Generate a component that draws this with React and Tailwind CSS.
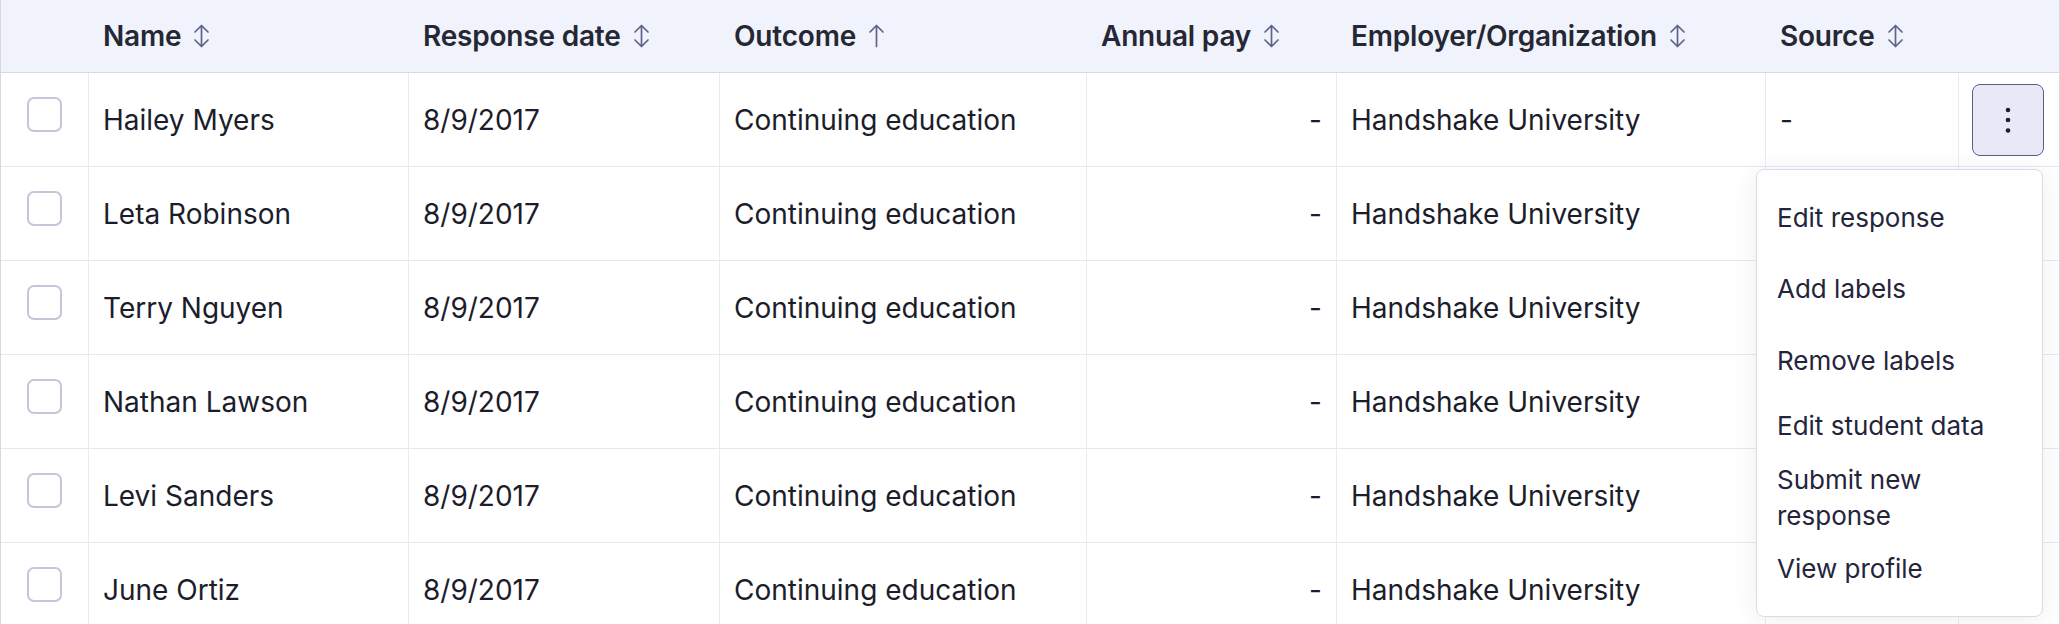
import React from "react";

const rows = [
  "Hailey Myers",
  "Leta Robinson",
  "Terry Nguyen",
  "Nathan Lawson",
  "Levi Sanders",
  "June Ortiz",
];

function SortBoth() {
  return (
    <svg width="17" height="24" viewBox="0 0 17 24" fill="none" className="ml-[12px] shrink-0">
      <path d="M8.5 1.5V22.5M2 8L8.5 1.5L15 8M2 16L8.5 22.5L15 16" stroke="#5f6389" strokeWidth="1.7" strokeLinecap="round" strokeLinejoin="round" />
    </svg>
  );
}

function SortUp() {
  return (
    <svg width="17" height="24" viewBox="0 0 17 24" fill="none" className="ml-[12px] shrink-0">
      <path d="M8.5 1.5V22.5M2 8L8.5 1.5L15 8" stroke="#5f6389" strokeWidth="1.7" strokeLinecap="round" strokeLinejoin="round" />
    </svg>
  );
}

const grid = "grid grid-cols-[87px_320px_311px_367px_250px_429px_193px_1fr]";

function Header() {
  const h = "flex items-center pl-[15px] text-[28px] font-semibold text-[#262734] tracking-[-0.2px]";
  return (
    <div className={`${grid} h-[73px] bg-[#f0f3fb] border-b border-[#d5d8e7]`}>
      <div />
      <div className={h}>Name<SortBoth /></div>
      <div className={h}>Response date<SortBoth /></div>
      <div className={h}>Outcome<SortUp /></div>
      <div className={h}>Annual pay<SortBoth /></div>
      <div className={h}>Employer/Organization<SortBoth /></div>
      <div className={h}>Source<SortBoth /></div>
      <div />
    </div>
  );
}

function Row({ name, first }) {
  const c = "flex items-center border-l border-[#eaebf2] pl-[14px] text-[28px] text-[#1c1d2b]";
  return (
    <div className={`${grid} h-[94px] border-b border-[#e7e9f1]`}>
      <div className="flex items-start pt-[24px] pl-[26px]">
        <div className="w-[35px] h-[35px] rounded-[7px] border-2 border-[#c4c7db] bg-white" />
      </div>
      <div className={c}>{name}</div>
      <div className={c}>8/9/2017</div>
      <div className={c}>Continuing education</div>
      <div className={`${c} justify-end pr-[14px]`}>-</div>
      <div className={c}>Handshake University</div>
      <div className={c}>-</div>
      <div className="flex items-center border-l border-[#eaebf2] pl-[13px]">
        {first && (
          <button className="w-[72px] h-[72px] rounded-lg border border-[#5c6080] bg-[#e8e9f6] flex items-center justify-center">
            <svg width="6" height="26" viewBox="0 0 6 26">
              <circle cx="3" cy="3" r="2.3" fill="#1e1f2e" />
              <circle cx="3" cy="13" r="2.3" fill="#1e1f2e" />
              <circle cx="3" cy="23.5" r="2.3" fill="#1e1f2e" />
            </svg>
          </button>
        )}
      </div>
    </div>
  );
}

function Menu() {
  const item = "text-[26px] leading-[36px] text-[#24253a]";
  return (
    <div className="absolute left-[1756px] top-[169px] w-[287px] bg-white border border-[#d9dbe8] rounded-lg shadow-[0_2px_24px_rgba(30,32,60,0.08)] pt-[30px] pb-[29px] pl-[20px] pr-[40px] flex flex-col">
      <div className={item}>Edit response</div>
      <div className={`${item} mt-[35px]`}>Add labels</div>
      <div className={`${item} mt-[36px]`}>Remove labels</div>
      <div className={`${item} mt-[29px]`}>Edit student data</div>
      <div className={`${item} mt-[18px]`}>Submit new<br />response</div>
      <div className={`${item} mt-[17px]`}>View profile</div>
    </div>
  );
}

export default function App() {
  return (
    <div className="relative w-[2060px] h-[624px] overflow-hidden bg-white font-['Inter','Noto_Sans',sans-serif]">
      <div className="border-l border-r border-[#d5d8e7]">
        <Header />
        {rows.map((n, i) => (
          <Row key={n} name={n} first={i === 0} />
        ))}
      </div>
      <Menu />
    </div>
  );
}
